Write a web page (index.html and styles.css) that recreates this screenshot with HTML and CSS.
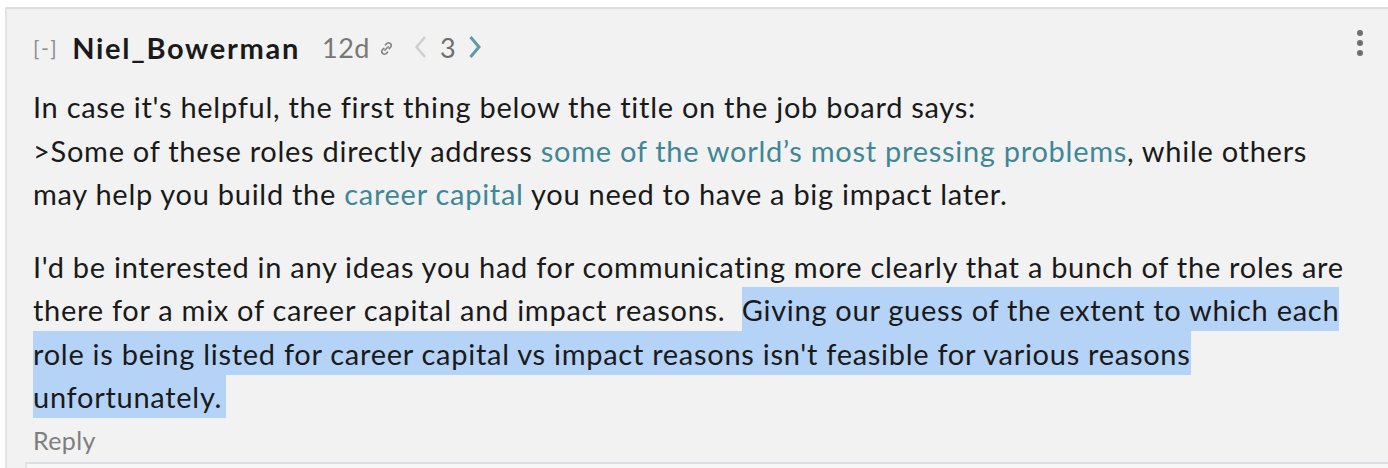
FILE: index.html
```html
<!DOCTYPE html>
<html>
<head>
<meta charset="utf-8">
<link rel="stylesheet" href="styles.css">
</head>
<body>
<div class="comment">
  <div class="head">
    <span class="toggle">[-]</span>
    <span class="author">Niel_Bowerman</span>
    <span class="date">12d</span>
    <svg class="link" viewBox="0 0 16 16" width="17" height="17"><path d="M6.4 9.6l3.2-3.2M7 4.6l1.4-1.4a2.5 2.5 0 0 1 3.5 3.5L10.5 8.1M9 11.4l-1.4 1.4a2.5 2.5 0 0 1-3.5-3.5L5.5 7.9" fill="none" stroke="#858585" stroke-width="1.5" stroke-linecap="round"/></svg>
    <span class="nav">
      <svg class="chev" viewBox="0 0 14 24" width="14" height="24"><path d="M12 2L3.5 12 12 22" fill="none" stroke="#cfcfcf" stroke-width="2.6"/></svg>
      <span class="count">3</span>
      <svg class="chev" viewBox="0 0 14 24" width="14" height="24"><path d="M2.5 2L11 12 2.5 22" fill="none" stroke="#5e9aa9" stroke-width="3"/></svg>
    </span>
    <span class="menu"><i></i><i></i><i></i></span>
  </div>
  <div class="body">
    <p>In case it's helpful, the first thing below the title on the job board says:<br>&gt;Some of these roles directly address <a href="#">some of the world’s most pressing problems</a>, while others may help you build the <a href="#">career capital</a> you need to have a big impact later.</p>
    <p>I'd be interested in any ideas you had for communicating more clearly that a bunch of the roles are there for a mix of career capital and impact reasons.&nbsp; <span class="sel">Giving our guess of the extent to which each role is being listed for career capital vs impact reasons isn't feasible for various reasons unfortunately.</span></p>
  </div>
  <div class="reply">Reply</div>
  <div class="child"></div>
</div>
</body>
</html>
```
FILE: styles.css
```css
html, body {
  margin: 0;
  padding: 0;
  background: #ffffff;
}
body {
  font-family: Lato, "Open Sans", sans-serif;
  color: #1a1a1a;
  height: 468px;
  overflow: hidden;
}
.comment {
  margin: 7px 0 0 5px;
  border-top: 2px solid #dcdee1;
  border-left: 2px solid #e2e4e6;
  background: #f2f2f2;
  padding: 0 0 0 26px;
  height: 461px;
  box-sizing: border-box;
  overflow: hidden;
}
.head {
  display: flex;
  align-items: center;
  height: 76px;
  position: relative;
}
.toggle {
  font-size: 21px;
  color: #8e8e8e;
  margin-right: 14px;
  letter-spacing: 1.5px;
}
.author {
  font-size: 29px;
  font-weight: 700;
  letter-spacing: 1.7px;
  color: #1a1a1a;
  margin-right: 22px;
}
.date {
  font-size: 27px;
  letter-spacing: 0.5px;
  color: #777;
}
.link {
  margin: 3px 0 0 8px;
}
.nav {
  display: flex;
  align-items: center;
  margin-left: 18px;
}
.count {
  font-size: 27px;
  color: #6e6e6e;
  margin: 0 12px 0 13px;
}
.menu {
  position: absolute;
  right: 25px;
  top: 21px;
  display: flex;
  flex-direction: column;
  gap: 4px;
}
.menu i {
  width: 6px;
  height: 6px;
  border-radius: 50%;
  background: #6f6f6f;
  display: block;
}
.body {
  font-size: 29px;
  letter-spacing: 0.72px;
  line-height: 43.5px;
  color: #1a1a1a;
  width: 1325px;
}
.body p {
  margin: 0 0 29px;
}
.body p:last-child {
  margin-bottom: 0;
}
.body a {
  color: #3f8796;
  text-decoration: none;
}
.sel {
  background: #b4d3f7;
  padding: 5px 4px 4px 0;
}
.reply {
  font-size: 25px;
  letter-spacing: 0.4px;
  color: #7e7e7e;
  line-height: 42px;
}
.child {
  margin: 1px 0 0 -8px;
  border-top: 2px solid #dcdee1;
  border-left: 2px solid #e2e4e6;
  background: #f7f7f7;
  height: 40px;
}
```
